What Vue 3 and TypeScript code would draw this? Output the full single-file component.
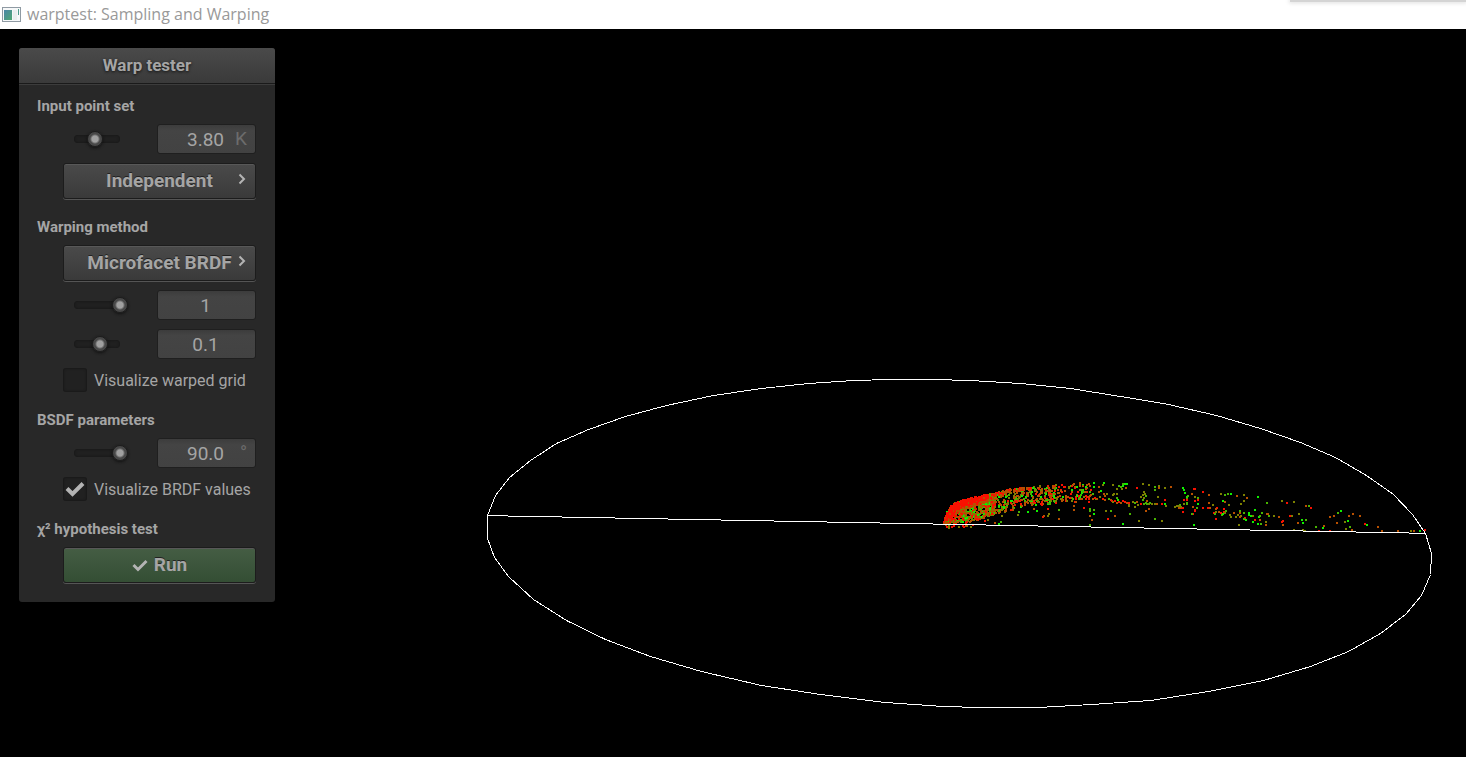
<script setup lang="ts">
import { ref } from 'vue'

type Pt = [number, number]
interface Dot {
  x: number
  y: number
  c: string
}

const pointCount = ref(46)
const alpha = ref(57)
const reflectance = ref(100)
const angle = ref(100)
const countText = ref('3.80')
const reflectanceText = ref('1')
const alphaText = ref('0.1')
const angleText = ref('90.0')
const showGrid = ref(false)
const showValues = ref(true)

// Unit circle after projection, as a closed polygon
const rim: Pt[] = [
  [487, 515], [495, 495], [509, 477], [530, 460], [556, 443], [588, 429], [625, 416],
  [666, 405], [713, 395], [761, 388], [808, 383], [853, 380], [890, 379], [932, 379],
  [970, 380], [1020, 383], [1070, 388], [1120, 396], [1168, 404], [1216, 415], [1260, 428],
  [1300, 442], [1335, 457], [1366, 475], [1393, 494], [1412, 514], [1425, 533], [1431, 553],
  [1430, 574], [1421, 595], [1405, 614], [1380, 633], [1348, 651], [1310, 666], [1263, 680],
  [1208, 691], [1150, 700], [1091, 704], [1038, 707], [980, 707], [943, 706], [885, 702],
  [820, 694], [761, 685], [701, 671], [650, 656], [605, 639], [566, 620], [533, 599],
  [508, 576], [494, 557], [487, 538],
]
const rimPoints = rim.map(([x, y]) => `${x + 0.5},${y + 0.5}`).join(' ')

// Sample value ramp, from high density (red) to low density (green)
const ramp = ['#f81000', '#b85000', '#7c8000', '#48b400', '#10f000']
const dots: Dot[] = []
const plot = (x: number, y: number, c: number) => {
  dots.push({ x: Math.round(x), y: Math.round(y), c: ramp[c] })
}

// Dense head of the lobe
let seed = 20177
const rnd = () => {
  seed = (Math.imul(seed, 1664525) + 1013904223) >>> 0
  return seed / 4294967296
}
const at = (curve: Pt[], x: number) => {
  let i = 1
  while (i < curve.length - 1 && curve[i][0] < x) i++
  const [x0, y0] = curve[i - 1]
  const [x1, y1] = curve[i]
  return y0 + ((y1 - y0) * (x - x0)) / (x1 - x0)
}
const crest: Pt[] = [
  [943, 521], [946, 512], [950, 505], [956, 501], [970, 497], [990, 493], [1010, 488],
  [1030, 486], [1047, 484], [1064, 483], [1080, 482], [1110, 483],
]
const base: Pt[] = [
  [943, 522], [970, 522], [985, 516], [1000, 512], [1015, 508], [1035, 505], [1060, 501], [1100, 501],
]
const pick = (list: number[]) => list[Math.floor(rnd() * list.length)]
for (let i = 0; i < 620; i++) {
  const x = 943 + 52 * rnd()
  const top = at(crest, x)
  plot(x, top + rnd() * (at(base, x) - top), pick([0, 0, 1, 1, 1, 2, 2, 2, 3, 4]))
}
for (let i = 0; i < 330; i++) {
  const x = 985 + 70 * Math.pow(rnd(), 1.4)
  const top = at(crest, x)
  plot(x, top + rnd() * (at(base, x) - top), pick([0, 0, 1, 1, 1, 2, 2, 3, 4]))
}
for (let i = 0; i < 95; i++) {
  const x = 1045 + 45 * rnd()
  plot(x, at(crest, x) + rnd() * 17, pick([0, 0, 1, 1, 2, 3, 4]))
}
for (let i = 0; i < 40; i++) {
  plot(1010 + 85 * rnd(), 496 + 5 * rnd(), pick([0, 1, 1, 2, 3]))
}
for (let i = 0; i < 70; i++) {
  const x = 990 + 40 * rnd()
  plot(x, at(crest, x) + 3 * rnd(), pick([0, 1, 1]))
}
for (let i = 0; i < 500; i++) {
  const x = 944 + 41 * rnd()
  const top = at(crest, x)
  const depth = Math.min(522 - top, x < 975 ? 16 - (x - 944) * 0.25 : 8)
  const u = rnd()
  plot(x, top + depth * u, u < 0.65 ? pick([0, 0, 0, 0, 0, 0, 0, 0, 1]) : pick([0, 1, 1, 2]))
}
for (let i = 0; i < 14; i++) {
  plot(945 + 28 * rnd(), 524 + 3 * rnd(), pick([0, 1, 2, 0]))
}

// Sparse tail of the lobe: x, y, ramp index; three units per pixel from the origin
const plotTail = (ox: number, oy: number, data: number[]) => {
  for (let i = 0; i < data.length; i += 3) {
    plot(ox + data[i] / 3 - 1, oy + data[i + 1] / 3 - 1, data[i + 2])
  }
}
plotTail(1180, 470, [
  9,54,4, 12,60,4, 15,68,4, 42,57,0, 45,57,0, 36,72,1, 45,81,2, 24,78,3, 21,84,2, 54,84,3, 12,90,0, 45,92,0,
  54,90,0, 21,99,3, 21,102,3, 54,102,4, 39,111,1, 51,113,3, 9,113,1, 3,113,0, 1,105,3, 45,120,0, 45,123,0,
  9,126,1, 39,131,0, 36,132,3, 42,165,4, 69,66,0, 87,75,1, 87,99,1, 99,105,2, 69,113,0, 84,113,0, 90,113,1,
  111,114,0, 108,118,1, 132,117,0, 102,128,0, 108,126,2, 105,131,3, 117,126,1, 123,128,0, 126,134,3, 132,126,0,
  138,123,3, 129,132,4, 135,129,2, 129,93,4, 135,96,1, 147,105,2, 108,147,0, 123,72,2, 135,75,3, 144,72,3,
  153,72,4, 171,78,1, 192,75,2, 201,84,1, 192,93,2, 183,102,2, 234,81,4, 150,135,2, 153,141,2, 162,129,1,
  168,140,2, 174,135,2, 180,123,3, 180,129,1, 183,138,2, 192,128,3, 180,141,1, 195,145,0, 192,147,3, 198,150,4,
  177,165,2, 207,129,4, 207,135,4, 213,138,4, 219,138,2, 225,120,4, 219,156,4, 225,150,0, 234,162,4, 240,150,1,
  237,141,4, 240,138,3, 246,129,3, 243,162,3, 258,156,2, 258,165,1, 261,132,1, 264,132,1, 267,138,3, 282,138,2,
  261,99,3, 297,141,1, 309,153,0, 306,156,0, 309,165,1, 306,93,2, 321,99,0, 342,96,2, 330,138,0, 336,138,2,
  357,132,2, 354,159,1, 366,150,4, 378,150,3, 369,159,4, 342,180,2, 369,180,2, 375,184,2, 378,108,1, 387,108,3,
  393,114,0, 408,171,3, 417,182,0, 429,174,4, 432,168,1, 450,182,0, 450,141,1, 462,138,1, 471,159,1, 474,129,3,
  483,123,4, 495,156,2, 504,153,4, 507,138,1, 519,132,1, 510,171,3, 498,177,2, 516,180,1, 540,138,1, 555,162,0,
  561,165,4, 594,171,1, 606,183,1, 654,183,1, 693,183,2, 702,183,1, 720,183,4, 735,180,0,
])
plotTail(930, 470, [
  450,39,1, 450,45,1, 441,51,4, 468,57,1, 466,66,1, 456,60,3, 459,66,3, 492,39,4, 492,51,4, 480,48,1, 483,60,0,
  480,66,3, 489,72,3, 480,78,1, 507,50,1, 522,39,4, 519,45,2, 522,72,1, 531,72,2, 525,78,1, 549,45,2, 567,48,3,
  561,57,2, 579,42,3, 579,48,4, 585,42,4, 591,42,4, 573,51,3, 588,54,1, 576,57,2, 552,72,2, 549,75,2, 561,72,2,
  513,63,4, 507,66,1, 510,80,2, 501,86,1, 519,86,0, 525,90,1, 537,87,3, 543,90,1, 546,93,0, 549,96,2, 555,93,0,
  561,99,1, 567,96,0, 573,99,1, 579,93,0, 585,96,0, 591,99,1, 597,99,0, 561,84,3, 564,90,4, 597,105,2, 597,108,2,
  609,96,2, 615,99,3, 621,97,1, 624,104,2, 633,102,0, 615,111,2, 642,102,3, 648,99,3, 651,102,3, 657,102,2,
  660,99,3, 666,103,2, 675,102,2, 681,103,1, 639,42,2, 657,45,2, 621,54,0, 675,51,3, 675,60,3, 687,48,2, 687,54,1,
  705,54,2, 723,51,1, 642,66,2, 645,72,2, 639,75,2, 648,78,3, 633,81,2, 642,84,2, 639,90,3, 651,93,1, 684,81,2,
  705,90,0, 696,102,0, 705,102,4, 708,108,2, 735,111,2, 741,108,2, 747,108,2, 747,114,1, 753,111,2, 759,114,0,
  762,102,2, 759,126,0, 771,81,4, 774,78,3, 771,90,0,
  387,120,3, 387,147,1, 432,120,1, 432,108,1, 462,114,0, 480,117,3, 480,123,3, 492,120,3, 492,132,4, 480,138,1,
  486,150,1, 480,165,3, 528,123,2, 543,123,3, 555,138,1, 534,147,0, 579,162,4, 600,132,3, 627,153,2, 648,123,1,
  657,117,1, 675,147,3, 696,153,2, 354,117,0, 357,132,2, 354,138,2, 339,141,0, 342,138,1, 321,123,4, 312,117,1,
  294,126,4, 264,135,2, 267,126,3, 216,138,2, 207,162,4, 214,156,3, 195,159,1, 173,150,2, 165,154,0,
])
</script>

<template>
  <div class="window">
    <header class="titlebar">
      <svg class="app-icon" width="20" height="16" viewBox="0 0 20 16" aria-hidden="true">
        <defs>
          <linearGradient id="pane" x1="0" y1="0" x2="1" y2="1">
            <stop offset="0" stop-color="#4a86a8" />
            <stop offset="1" stop-color="#4fa872" />
          </linearGradient>
        </defs>
        <rect x="0.5" y="0.5" width="18" height="14" fill="#f6f8f9" stroke="#8f9aa3" />
        <rect x="2" y="3" width="8" height="10" fill="url(#pane)" />
        <rect x="11" y="3" width="4" height="10" fill="#e9eeee" />
        <rect x="16" y="2" width="1" height="6" fill="#4f9c8c" />
      </svg>
      <h1 class="caption">warptest: Sampling and Warping</h1>
      <span class="neighbour-edge"></span>
    </header>

    <main class="viewport">
      <svg class="scene" viewBox="0 29 1466 728" shape-rendering="crispEdges" role="img" aria-label="Warped samples">
        <rect v-for="(d, i) in dots" :key="i" :x="d.x" :y="d.y" width="2" height="2" :fill="d.c" />
        <polygon :points="rimPoints" class="wire" />
        <line x1="487" y1="515.6" x2="1425" y2="533.3" class="wire" />
      </svg>

      <form class="panel" @submit.prevent>
        <h2 class="panel-title">Warp tester</h2>
        <div class="panel-body">
          <section class="group">
            <h3 class="group-title">Input point set</h3>
            <div class="row">
              <span class="track"><input v-model="pointCount" type="range" aria-label="Point count slider" /></span>
              <span class="field">
                <input v-model="countText" type="text" aria-label="Point count" />
                <span class="unit">K</span>
              </span>
            </div>
            <button type="button" class="btn">
              Independent
              <svg class="chevron" width="8" height="12" viewBox="0 0 8 12"><path d="M1.5 1.5 6 6 1.5 10.5" /></svg>
            </button>
          </section>

          <section class="group">
            <h3 class="group-title">Warping method</h3>
            <button type="button" class="btn">
              Microfacet BRDF
              <svg class="chevron" width="8" height="12" viewBox="0 0 8 12"><path d="M1.5 1.5 6 6 1.5 10.5" /></svg>
            </button>
            <div class="row">
              <span class="track"><input v-model="reflectance" type="range" aria-label="Parameter 1 slider" /></span>
              <span class="field"><input v-model="reflectanceText" type="text" aria-label="Parameter 1" /></span>
            </div>
            <div class="row">
              <span class="track"><input v-model="alpha" type="range" aria-label="Parameter 2 slider" /></span>
              <span class="field"><input v-model="alphaText" type="text" aria-label="Parameter 2" /></span>
            </div>
            <label class="check">
              <input v-model="showGrid" type="checkbox" />
              <svg class="tick" width="20" height="16" viewBox="0 0 20 16"><path d="M2 7.5 7.5 13 18 2.5" /></svg>
              <span>Visualize warped grid</span>
            </label>
          </section>

          <section class="group">
            <h3 class="group-title">BSDF parameters</h3>
            <div class="row">
              <span class="track"><input v-model="angle" type="range" aria-label="Angle slider" /></span>
              <span class="field">
                <input v-model="angleText" type="text" aria-label="Angle" />
                <span class="unit">°</span>
              </span>
            </div>
            <label class="check">
              <input v-model="showValues" type="checkbox" />
              <svg class="tick" width="20" height="16" viewBox="0 0 20 16"><path d="M2 7.5 7.5 13 18 2.5" /></svg>
              <span>Visualize BRDF values</span>
            </label>
          </section>

          <section class="group">
            <h3 class="group-title">χ² hypothesis test</h3>
            <button type="submit" class="btn run">
              <svg class="run-tick" width="16" height="13" viewBox="0 0 16 13"><path d="M1.5 6 6 10.5 14.5 2" /></svg>
              Run
            </button>
          </section>
        </div>
      </form>
    </main>
  </div>
</template>

<style>
html,
body {
  background: #000;
}
</style>

<style scoped>
.window {
  display: flex;
  flex-direction: column;
  min-height: 100vh;
  background: #000;
  font-family: Roboto, 'Liberation Sans', sans-serif;
  color: #a5a5a5;
}
.titlebar {
  position: relative;
  display: flex;
  align-items: center;
  gap: 5px;
  height: 29px;
  padding-left: 2px;
  background: #fff;
}
.caption {
  margin: 0;
  font: 400 16px/29px 'Open Sans', 'Noto Sans', sans-serif;
  color: #999;
}
.neighbour-edge {
  position: absolute;
  top: 0;
  right: 0;
  width: 12%;
  height: 2px;
  background: #d4d4d4;
  box-shadow: 0 0 4px 1px #ddd;
}
.viewport {
  display: grid;
  flex: 1;
  justify-items: start;
  align-items: start;
}
.scene {
  grid-area: 1 / 1;
  display: block;
  width: 100%;
  height: auto;
}
.wire {
  fill: none;
  stroke: #fff;
  stroke-width: 1;
}
.panel {
  grid-area: 1 / 1;
  z-index: 1;
  box-sizing: border-box;
  width: 256px;
  margin: 19px;
  border-radius: 3px;
  background: #282828;
  overflow: hidden;
}
.panel-title {
  margin: 0;
  border-bottom: 1px solid #1a1a1a;
  background: linear-gradient(#4a4a4a, #3a3a3a);
  box-shadow: 0 1px 0 #3c3c3c;
  font-size: 17px;
  font-weight: 700;
  line-height: 35px;
  text-align: center;
  text-shadow: 0 1px 3px #111;
}
.panel-body {
  display: flex;
  flex-direction: column;
  gap: 17px;
  padding: 11px 19px 19px 18px;
}
.group {
  display: flex;
  flex-direction: column;
  gap: 9px;
  padding-left: 26px;
}
.group-title {
  margin: 0 0 0 -26px;
  padding-top: 2px;
  font-size: 15px;
  font-weight: 700;
  line-height: 18px;
}
.row {
  display: flex;
  align-items: center;
  justify-content: space-between;
  height: 30px;
  padding-left: 11px;
}
.track {
  display: flex;
  align-items: center;
  width: 46px;
  height: 8px;
  border-radius: 4px;
  background: #202020;
  box-shadow: inset 0 0 2px 1px #1a1a1a;
}
.track input {
  flex: none;
  width: 62px;
  height: 16px;
  margin: 0 -8px;
  appearance: none;
  background: none;
}
.track input::-webkit-slider-thumb {
  appearance: none;
  width: 16px;
  height: 16px;
  border: 1px solid #1d1d1d;
  border-radius: 50%;
  background: radial-gradient(circle, #a0a0a0 3px, #484848 5px);
  box-shadow: 0 1px 3px #111;
}
.field {
  position: relative;
  width: 99px;
}
.field input {
  display: block;
  box-sizing: border-box;
  width: 100%;
  height: 30px;
  padding: 0 2px 0 0;
  border: 1px solid #1f1f1f;
  border-radius: 3px;
  background: linear-gradient(#3c3c3c, #444 20%, #424242);
  font: 400 19px/28px Roboto, sans-serif;
  color: #a5a5a5;
  text-align: center;
}
.unit {
  position: absolute;
  top: 0;
  right: 9px;
  font-size: 19px;
  line-height: 30px;
  color: #6c6c6c;
}
.btn {
  position: relative;
  display: flex;
  align-items: center;
  justify-content: center;
  gap: 6px;
  height: 36px;
  padding: 0;
  border: 1px solid #1c1c1c;
  border-radius: 3px;
  background: linear-gradient(#4a4a4a, #3a3a3a);
  box-shadow: inset 0 1px 0 #585858, 0 1px 0 #555;
  font: 700 19px/34px Roboto, sans-serif;
  color: #a5a5a5;
  text-shadow: 0 -1px 0 #222;
}
.btn.run {
  background: linear-gradient(#455d44, #344e34);
}
.chevron {
  position: absolute;
  top: 9px;
  right: 9px;
}
.chevron path,
.run-tick path,
.tick path {
  fill: none;
  stroke: #b4b4b4;
  stroke-width: 2;
}
.run-tick path {
  stroke-width: 3;
}
.tick path {
  stroke-width: 4;
}
.check {
  display: grid;
  grid-template-columns: 24px 1fr;
  align-items: center;
  column-gap: 7px;
  height: 24px;
  font-size: 16px;
}
.check input {
  grid-area: 1 / 1;
  width: 24px;
  height: 24px;
  margin: 0;
  appearance: none;
  border-radius: 3px;
  background: #212121;
  box-shadow: inset 0 0 2px 1px #191919;
}
.tick {
  grid-area: 1 / 1;
  justify-self: center;
  visibility: hidden;
  pointer-events: none;
}
.check input:checked + .tick {
  visibility: visible;
}
</style>
